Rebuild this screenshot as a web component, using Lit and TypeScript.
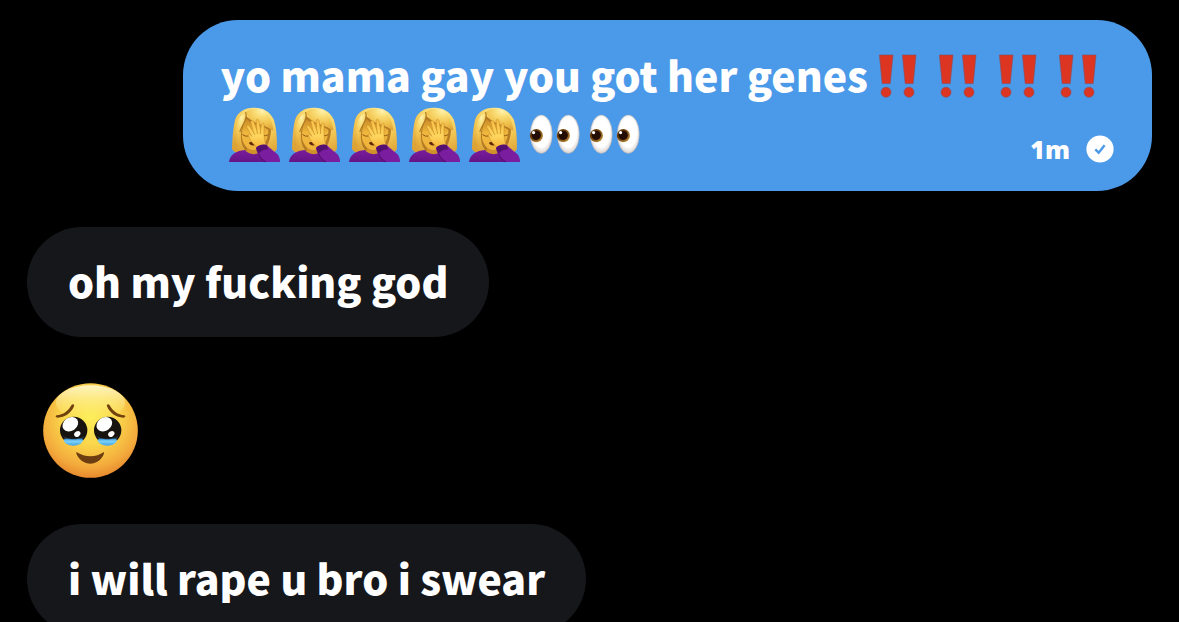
import { LitElement, html, css, svg } from "lit";
import { customElement } from "lit/decorators.js";

const bangs = () => html`<svg class="emoji" viewBox="0 0 60 60" role="img" aria-label="double exclamation mark">
  ${[0, 23].map(
    (dx) => svg`<g transform="translate(${dx} 0)" fill="#dc3522" stroke="#8f4a55" stroke-width="0.6">
      <path d="M11.4 9H25L22.2 37.6H14.2Z" />
      <circle cx="18" cy="46.3" r="5" />
    </g>`
  )}
</svg>`;

const facepalm = () => html`<svg class="emoji" viewBox="0 0 60 60" role="img" aria-label="woman facepalming">
  <defs>
    <radialGradient id="hair" cx="0.6" cy="0.1" r="0.95">
      <stop offset="0" stop-color="#fff3b5" />
      <stop offset="0.25" stop-color="#fae07c" />
      <stop offset="0.6" stop-color="#f2c551" />
      <stop offset="1" stop-color="#dda236" />
    </radialGradient>
    <linearGradient id="skin" x1="0" y1="0" x2="0" y2="1">
      <stop offset="0" stop-color="#c98a26" />
      <stop offset="0.45" stop-color="#efb83d" />
      <stop offset="1" stop-color="#f0b23c" />
    </linearGradient>
    <linearGradient id="hand" x1="0" y1="0" x2="0" y2="1">
      <stop offset="0" stop-color="#f6bf42" />
      <stop offset="0.6" stop-color="#ffd65e" />
      <stop offset="1" stop-color="#f3b53a" />
    </linearGradient>
    <linearGradient id="top" x1="0" y1="0" x2="0" y2="1">
      <stop offset="0" stop-color="#7a1c9c" />
      <stop offset="1" stop-color="#651487" />
    </linearGradient>
  </defs>
  <path fill="url(#hair)" d="M29.500 1.800C20 1.500 12.500 6 10 14C8 22 7.500 33 7 42C7 45 10 46.600 15 47H44C49 46.600 52 45 52 42C52 32 51.500 22 49 14C45 5.500 38 1.800 29.500 1.800Z" />
  <path fill="#b47b24" d="M21 10C17 17 15.500 26 16 33C16.500 38 18 42 21 45H39C43 40 46 31 46 23C40 18 28 16 21 10Z" />
  <path fill="#cf922b" d="M22 38H37V49H22Z" />
  <path fill="url(#skin)" d="M21 13C18 19 16.500 26 17 32C18 39 23 44 28.500 44C36 44 43 37 43.500 24C37 19 27 18 21 13Z" />
  <path fill="url(#hair)" d="M21 6.500C23 3 28 2 32 2.500C41 4 47 12 48.500 24C48 25 46 24 44 22C37 18 25 18 21 6.500Z" />
  <path fill="url(#hair)" d="M20.500 6.500C23 14 16 19 14.500 26C13.500 31 15 36 14 41L9 40C9 26 11 11 20.500 6.500Z" />
  <path d="M20.500 6C23.500 13 16.500 19 14.800 26" fill="none" stroke="#b07a24" stroke-width="1.100" />
  <path d="M17.500 28.500Q20.500 31 23.500 30M38.500 29.500Q41 30.500 43 28.500" fill="none" stroke="#8c5718" stroke-width="1" />
  <path fill="#5c260d" d="M24 37C25 35.300 29 35.500 30.500 38.500C29 40 25 39.800 24 37Z" />
  <path fill="url(#top)" d="M4 56C5 49 10 45 20 44C24 49.500 33 49.500 38 44C48 44.500 54 49 55 56Z" />
  <path fill="url(#hand)" stroke="#c48728" stroke-width="0.500" d="M31.500 41C27.500 37.500 25 34 23.800 30C23.300 28.300 24.300 27.600 25.300 28.600L27 30.500L22 21.500C21 19.200 23 18.200 24.300 20.200L28.300 25.800L26 16.500C25.500 14.200 27.800 13.600 28.800 15.800L31.800 24.200L31.200 15C31.200 12.900 33.500 12.700 34 14.800L35.500 24.500L36.600 18.500C37.200 16.300 39.300 16.800 39 19L39 29C39.200 33 40 36.500 41.500 39.500Z" />
  <path d="M28.300 25.800L29.800 29M31.800 24.200L32.600 28M35.500 24.500L35.600 28" fill="none" stroke="#c48728" stroke-width="0.700" />
  <path fill="#7b1d9f" d="M31 42C33 39.500 38 38 41.500 39L49 45.500C53 48 55 51 55 56H41C36 53 32 48 31 42Z" />
  <path fill="#54106f" d="M31 42C33 39 38 37.500 42 39L43 43.500C39 43 35.500 45 33.500 48Z" />
  <path d="M33.500 48Q36 53.500 41 56" fill="none" stroke="#4b0c68" stroke-width="1" />
</svg>`;

const eyes = () => html`<svg class="emoji" viewBox="0 0 60 60" role="img" aria-label="eyes">
  <defs>
    <radialGradient id="white" cx="0.5" cy="0.45" r="0.55">
      <stop offset="0.7" stop-color="#ffffff" />
      <stop offset="1" stop-color="#d9d2ce" />
    </radialGradient>
    <radialGradient id="iris" cx="0.4" cy="0.4" r="0.65">
      <stop offset="0" stop-color="#5c3206" />
      <stop offset="0.6" stop-color="#6d4110" />
      <stop offset="1" stop-color="#c99c48" />
    </radialGradient>
  </defs>
  ${[0, 27].map(
    (dx) => svg`<g transform="translate(${dx} 0)">
      <ellipse cx="16.3" cy="28.2" rx="11" ry="19.2" fill="url(#white)" stroke="#a4aab5" stroke-width="0.5" />
      <circle cx="11.4" cy="29.7" r="6.6" fill="url(#iris)" />
      <circle cx="11.2" cy="29.3" r="4.6" fill="#230d03" />
      <circle cx="8.6" cy="26.6" r="1.6" fill="#fff" />
    </g>`
  )}
</svg>`;

const tearyFace = () => html`<svg class="big-emoji" viewBox="39 39 285 285" role="img" aria-label="face holding back tears">
  <defs>
    <radialGradient id="face" cx="0.5" cy="0.36" r="0.66">
      <stop offset="0" stop-color="#fdee58" />
      <stop offset="0.45" stop-color="#fad54b" />
      <stop offset="0.8" stop-color="#f3aa3c" />
      <stop offset="1" stop-color="#e5832b" />
    </radialGradient>
    <linearGradient id="gloss" x1="0" y1="0" x2="0" y2="1">
      <stop offset="0" stop-color="#fffbd8" stop-opacity="0.85" />
      <stop offset="1" stop-color="#fff27c" stop-opacity="0" />
    </linearGradient>
    <linearGradient id="tear" x1="0" y1="0" x2="0" y2="1">
      <stop offset="0" stop-color="#2f8fd8" />
      <stop offset="0.35" stop-color="#7fd3fa" />
      <stop offset="1" stop-color="#43a5e6" />
    </linearGradient>
  </defs>
  <circle cx="181.500" cy="181.500" r="142" fill="url(#face)" />
  <ellipse cx="181.500" cy="98" rx="104" ry="52" fill="url(#gloss)" />
  <path fill="#70400f" d="M80 136C99 135 115 123 124 106C128 100 134 102 132 109C124 129 104 143 83 143C77 143 75 138 80 136Z" />
  <path fill="#70400f" d="M283 136C264 135 248 123 239 106C235 100 229 102 231 109C239 129 259 143 280 143C286 143 288 138 283 136Z" />
  ${[0, 102].map(
    (dx) => svg`<g transform="translate(${dx} 0)">
      <circle cx="131" cy="181" r="41" fill="#17130f" />
      <path fill="#2c3c4c" d="M99 198C110 209 151 209 163 198C159 209 150 217 131 218C112 217 104 209 99 198Z" />
      <ellipse cx="121" cy="163" rx="25" ry="20" transform="rotate(-35 121 163)" fill="#fff" />
      <ellipse cx="142" cy="192" rx="10" ry="8" transform="rotate(-35 142 192)" fill="#fff" />
      <path fill="url(#tear)" d="M101 211C104 203 115 208 130 208C145 208 156 203 159 210C157 222 143 227 130 227C116 227 104 221 101 211Z" />
    </g>`
  )}
  <path fill="#6b3d10" d="M139 246C165 263 198 263 222 246C224 252 211 281 181 281C151 281 137 252 139 246Z" />
</svg>`;

const sentIcon = () => html`<svg class="sent" viewBox="0 0 28 28" role="img" aria-label="Sent">
  <circle cx="14" cy="14" r="13.6" fill="#fff" />
  <path d="M9.300 14.300L12.700 17.700L18.600 10.300" fill="none" stroke="#4b99e9" stroke-width="2.400" />
</svg>`;

@customElement("app-root")
export class AppRoot extends LitElement {
  static styles = css`
    :host {
      display: block;
      box-sizing: border-box;
      height: 100vh;
      overflow: hidden;
      background: #000;
      color: #fff;
      font: 900 41px/56px "Noto Sans CJK SC", "Noto Sans", sans-serif;
    }
    .thread {
      display: flex;
      flex-direction: column;
      align-items: flex-start;
      margin: 0;
      padding: 20px 27px;
      list-style: none;
    }
    .bubble {
      padding: 25px 41px 29px;
      border-radius: 55px;
      background: #16171a;
      margin-bottom: 46px;
    }
    .outgoing {
      align-self: flex-end;
      padding: 26px 38px 25px;
      background: #4b99e9;
      margin-bottom: 36px;
    }
    .line {
      display: flex;
      white-space: pre;
    }
    .emoji {
      display: block;
      flex: none;
      width: 60px;
      height: 60px;
    }
    .big-emoji {
      display: block;
      width: 95px;
      height: 95px;
      margin: 0 16px 46px;
    }
    .first {
      padding-right: 6px;
    }
    .second {
      padding-left: 4px;
    }
    .meta {
      display: flex;
      align-items: center;
      gap: 16px;
      margin-left: auto;
      align-self: flex-end;
      padding-bottom: 3px;
      font: 800 25px/28px "Open Sans", "Noto Sans", sans-serif;
    }
    .sent {
      display: block;
      width: 28px;
      height: 28px;
    }
  `;

  render() {
    return html`<ul class="thread">
      <li class="bubble outgoing">
        <div class="line first"><span>yo mama gay you got her genes</span>${[0, 1, 2, 3].map(bangs)}</div>
        <div class="line second">${[0, 1, 2, 3, 4].map(facepalm)}${[0, 1].map(eyes)}<span class="meta"><time>1m</time>${sentIcon()}</span></div>
      </li>
      <li class="bubble">oh my fucking god</li>
      <li>${tearyFace()}</li>
      <li class="bubble">i will rape u bro i swear</li>
    </ul>`;
  }
}
